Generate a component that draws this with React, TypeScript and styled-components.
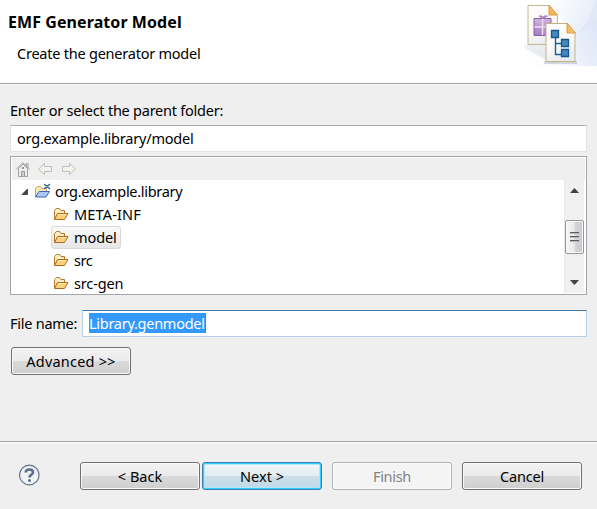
import React from "react";
import styled, { createGlobalStyle, css } from "styled-components";

const GlobalStyle = createGlobalStyle`
  *, *::before, *::after { box-sizing: border-box; }
  body { margin: 0; background: #efefef; overflow: hidden; }
`;

const Dialog = styled.div`
  width: 597px;
  height: 509px;
  display: flex;
  flex-direction: column;
  background: #efefef;
  color: #000;
  font: 14.5px/20px "Noto Sans", "Open Sans", sans-serif;
  white-space: nowrap;
`;

const Text = styled.span<{ $track?: number }>`
  display: block;
  letter-spacing: ${(p) => p.$track ?? -0.3}px;
`;

const Header = styled.header`
  height: 85px;
  display: flex;
  justify-content: space-between;
  background: #fff;
  border-bottom: 1px solid #fcfcfc;
  box-shadow: inset 0 -1px 0 #a0a0a0;
`;

const HeaderText = styled.div`
  padding: 12px 0 0 8px;
`;

const Title = styled.h1`
  margin: 0;
  font-size: 16px;
  line-height: 20px;
  font-weight: 700;
`;

const Subtitle = styled.div`
  padding: 11px 0 0 9px;
`;

const Body = styled.main`
  height: 356px;
  padding: 15px 10px 0;
`;

const FieldLabel = styled.label`
  display: block;
  height: 25px;
`;

const Field = styled.div<{ $focus?: boolean }>`
  flex: 1;
  height: 27px;
  display: flex;
  align-items: center;
  padding: 0 6px 2px;
  background: #fff;
  border: 1px solid ${(p) => (p.$focus ? "#b5cfe7" : "#e2e3ea")};
  border-top-color: ${(p) => (p.$focus ? "#3d7bad" : "#abadb3")};
  border-radius: 1px;
`;

const Selected = styled.span`
  height: 20px;
  background: #3399ff;
  color: #fff;
  border-right: 1px solid #c06a10;
`;

const FolderPanel = styled.section`
  height: 139px;
  margin-top: 4px;
  border: 1px solid #a3a5ab;
  padding: 1px;
  background: #fff;
  display: flex;
  flex-direction: column;
`;

const NavBar = styled.div`
  height: 22px;
  flex: none;
  display: flex;
  background: #efefef;
  padding: 2px 0 0 3px;
  gap: 3px;
`;

const TreeArea = styled.div`
  display: flex;
  height: 113px;
  overflow: hidden;
`;

const Tree = styled.div`
  flex: 1;
  overflow: hidden;
`;

const TreeRow = styled.div<{ $child?: boolean }>`
  height: 23px;
  display: flex;
  align-items: center;
  padding-left: ${(p) => (p.$child ? 39 : 8)}px;
`;

const Node = styled.div<{ $on?: boolean; $root?: boolean }>`
  height: 23px;
  display: flex;
  align-items: center;
  gap: ${(p) => (p.$root ? 4 : 5)}px;
  padding: 0 3px 2px 1px;
  border: 1px solid transparent;
  border-radius: 3px;
  ${(p) =>
    p.$on &&
    css`
      border-color: #d9d9d9;
      background: linear-gradient(#fafafa, #e6e6e6);
    `}
`;

const ScrollBar = styled.div`
  width: 20px;
  height: 113px;
  margin-right: 1px;
  display: flex;
  flex-direction: column;
  align-items: center;
  background: #f0f0f0;
  border-left: 1px solid #e8e8e8;
`;

const Arrow = styled.svg`
  display: block;
  flex: none;
`;

const Thumb = styled.div`
  width: 19px;
  height: 34px;
  margin: 21px 0;
  border: 1px solid #979797;
  border-radius: 2px;
  background: linear-gradient(90deg, #f6f6f6, #e9e9eb 48%, #d5d5d9 55%, #c9c9ce);
  box-shadow: inset 0 0 0 1px #fafafa;
  display: flex;
  flex-direction: column;
  align-items: center;
  justify-content: center;
  gap: 2px;
`;

const Grip = styled.i`
  width: 9px;
  height: 2px;
  background: linear-gradient(#5c5c5c 50%, #b8b8b8 50%);
`;

const FileRow = styled.div`
  display: flex;
  align-items: center;
  margin: 15px 0 10px;
`;

const FileLabel = styled.label`
  width: 72px;
  padding-bottom: 2px;
`;

type Tone = "normal" | "primary" | "disabled";

const tones = {
  normal: css`
    border-color: #707070;
    box-shadow: inset 0 0 0 1px #fafafa;
    background: linear-gradient(#f2f2f2, #ebebeb 48%, #dadada 50%, #cfcfcf);
  `,
  primary: css`
    border-color: #3c7fb1;
    box-shadow: inset 0 0 0 1px #35cbfa, inset 0 0 0 2px #b4e6f7;
    background: linear-gradient(#f0f5f8, #e3edf2 48%, #cddfe9 50%, #bfd9e7);
  `,
  disabled: css`
    border-color: #adb2b5;
    box-shadow: inset 0 0 0 1px #fbfbfb;
    background: #f4f4f4;
    color: #838383;
  `,
};

const Button = styled.button<{ $tone?: Tone; $gap?: number }>`
  width: 120px;
  height: 28px;
  padding: 0;
  margin-left: ${(p) => p.$gap ?? 0}px;
  border: 1px solid;
  border-radius: 3px;
  display: flex;
  align-items: center;
  justify-content: center;
  font: inherit;
  color: #000;
  ${(p) => tones[p.$tone ?? "normal"]}
`;

const Footer = styled.footer`
  height: 68px;
  border-top: 1px solid #a0a0a0;
  box-shadow: inset 0 1px 0 #fff;
  display: flex;
  padding: 20px 0 0 18px;
`;

const HelpSlot = styled.div`
  width: 62px;
  padding-top: 2px;
`;

const Banner = () => (
  <svg width="77" height="67" viewBox="0 0 77 67">
    <defs>
      <linearGradient id="sky" x1="0" y1="0.6" x2="1" y2="0.3">
        <stop offset="0" stopColor="#fff" />
        <stop offset="0.5" stopColor="#f1f4fc" />
        <stop offset="1" stopColor="#dfe7f7" />
      </linearGradient>
      <linearGradient id="glow" x1="0" y1="0" x2="1" y2="0.3">
        <stop offset="0" stopColor="#fff" />
        <stop offset="1" stopColor="#e6ecf9" />
      </linearGradient>
      <linearGradient id="paper" x1="0" y1="0" x2="0.4" y2="1">
        <stop offset="0" stopColor="#fff" />
        <stop offset="0.6" stopColor="#faf9f7" />
        <stop offset="1" stopColor="#e9ecef" />
      </linearGradient>
      <linearGradient id="gift" x1="0" y1="0" x2="0" y2="1">
        <stop offset="0" stopColor="#cdb4de" />
        <stop offset="1" stopColor="#a57bc0" />
      </linearGradient>
    </defs>
    <path d="M4 66V52Q40 50 77 17V66Z" fill="url(#sky)" />
    <path d="M30 0H77V17Q65 29 53 36L38 14Z" fill="url(#glow)" />
    <path d="M77 0V17Q67 28 57 34Q72 18 76 0Z" fill="#e0e7f6" />
    <path d="M4 45H38V63H32L6 49Z" fill="#c9ced8" opacity="0.35" />
    <path d="M8 5.500H29L37.500 15V44.500H8Z" fill="url(#paper)" stroke="#c6b98e" />
    <path d="M29 5L37.500 15H29Z" fill="#f6b85c" stroke="#d99d4b" />
    <path d="M14 18.500H31V35.500H14Z" fill="url(#gift)" stroke="#8f60ae" />
    <path d="M22.500 19V35M14.500 27H30.500" fill="none" stroke="#e9dcf2" strokeWidth="1.600" />
    <path d="M22.500 18.500L19 16H22L22.500 18.500L24 16H27.500Z" fill="#c7a6d9" stroke="#a67dbf" />
    <path d="M24 61H57V64H24Z" fill="#9da6b5" opacity="0.4" />
    <path d="M26 23.500H47L55 33V61.500H26Z" fill="url(#paper)" stroke="#c2b387" />
    <path d="M47 23L55.500 33H47Z" fill="#f9bd64" stroke="#d99d4b" />
    <path d="M35.500 38V54.500H42M35.500 43.500H42" fill="none" stroke="#16629f" strokeWidth="1.400" />
    <path d="M31.500 30.500H38.500V37.500H31.500ZM41.500 39.500H48.500V46.500H41.500ZM41.500 49.500H48.500V56.500H41.500Z" fill="#4a87bb" stroke="#17578f" strokeWidth="1.300" />
  </svg>
);

const Home = () => (
  <svg width="18" height="18" viewBox="0 0 18 18" fill="none" stroke="#a2a2a2">
    <path d="M3.500 8.500V16.500H12.500V8.500L8 4Z" fill="#ececec" />
    <path d="M1 9.500L8 2.500L14.500 9.500M11.500 6V3.500H13V8" />
    <path d="M6.500 16V11.500H9.500V16" fill="#d0d0d0" stroke="#999" />
    <path d="M7 8H9" stroke="#999" strokeWidth="2" />
  </svg>
);

const NavArrow = ({ flip }: { flip?: boolean }) => (
  <svg width="20" height="18" viewBox="0 0 20 18">
    <path
      transform={flip ? "matrix(-1 0 0 1 19 0)" : undefined}
      d="M2.500 9L8.500 3.500V6.500H15.500V11.500H8.500V14.500Z"
      fill="#f4f4ee"
      stroke="#bcbdb7"
      strokeLinejoin="round"
    />
  </svg>
);

const Folder = () => (
  <svg width="16" height="14" viewBox="0 0 16 14" strokeLinejoin="round">
    <path d="M1.500 12V3.500L3.500 1.500H6.500L8 3.500H11.500V6" fill="#fcecc0" stroke="#b8792d" />
    <path d="M1.500 12.500L4.500 6.500H15L11.500 12.500Z" fill="#fbd17b" stroke="#ad6a20" />
    <path d="M5 7.500H13.500" stroke="#ffe9ac" />
  </svg>
);

const Project = () => (
  <svg width="17" height="16" viewBox="0 0 17 16" strokeLinejoin="round">
    <path d="M1.500 13V5.500L3.500 3.500H6.500L8 5.500H12.500V8" fill="#fce9b6" stroke="#c4a066" />
    <path d="M1.500 14L5 8.500H15.500L12 14Z" fill="#a9c9f4" stroke="#3f64b5" />
    <path d="M10 1L12 2.700H14L16 1M10 6L12 4.300H14L16 6" fill="none" stroke="#28658f" strokeWidth="1.200" />
  </svg>
);

const Expander = () => (
  <svg width="12" height="8" viewBox="0 0 12 8">
    <path d="M7.500 1V6.500H2Z" fill="#444" stroke="#262626" strokeWidth="0.700" />
  </svg>
);

const Help = () => (
  <svg width="23" height="23" viewBox="0 0 23 23">
    <circle cx="11.300" cy="11" r="9.800" fill="#f0f1f3" stroke="#60718f" strokeWidth="1.200" />
    <path d="M7.700 8.500Q7.700 5.500 11.400 5.500Q15 5.500 15 8.300Q15 10 13 11Q11.500 11.800 11.500 13.500" fill="none" stroke="#5d6d8f" strokeWidth="2.600" />
    <circle cx="11.500" cy="16.500" r="1.500" fill="#5d6d8f" />
  </svg>
);

const folders = [
  { name: "META-INF", track: 0.15 },
  { name: "model", track: -0.1 },
  { name: "src", track: -0.4 },
  { name: "src-gen", track: -0.15 },
];

export default function App() {
  return (
    <>
      <GlobalStyle />
      <Dialog>
        <Header>
          <HeaderText>
            <Title><Text $track={0.08}>EMF Generator Model</Text></Title>
            <Subtitle><Text $track={-0.23}>Create the generator model</Text></Subtitle>
          </HeaderText>
          <Banner />
        </Header>
        <Body>
          <FieldLabel><Text $track={-0.24}>Enter or select the parent folder:</Text></FieldLabel>
          <Field><Text $track={-0.2}>org.example.library/model</Text></Field>
          <FolderPanel>
            <NavBar><Home /><NavArrow /><NavArrow flip /></NavBar>
            <TreeArea>
              <Tree>
                <TreeRow>
                  <Expander />
                  <Node $root><Project /><Text>org.example.library</Text></Node>
                </TreeRow>
                {folders.map(({ name, track }) => (
                  <TreeRow key={name} $child>
                    <Node $on={name === "model"}><Folder /><Text $track={track}>{name}</Text></Node>
                  </TreeRow>
                ))}
              </Tree>
              <ScrollBar>
                <Arrow width="9" height="19" viewBox="0 0 9 19"><path d="M0 13L4.500 8L9 13Z" fill="#444" /></Arrow>
                <Thumb><Grip /><Grip /><Grip /></Thumb>
                <Arrow width="9" height="14" viewBox="0 0 9 14"><path d="M0 5L4.500 10L9 5Z" fill="#444" /></Arrow>
              </ScrollBar>
            </TreeArea>
          </FolderPanel>
          <FileRow>
            <FileLabel><Text $track={-0.25}>File name:</Text></FileLabel>
            <Field $focus><Selected><Text $track={-0.27}>Library.genmodel</Text></Selected></Field>
          </FileRow>
          <Button $gap={1}><Text $track={0.2}>Advanced &gt;&gt;</Text></Button>
        </Body>
        <Footer>
          <HelpSlot><Help /></HelpSlot>
          <Button><Text $track={0}>&lt; Back</Text></Button>
          <Button $tone="primary" $gap={2}><Text $track={0}>Next &gt;</Text></Button>
          <Button $tone="disabled" $gap={10} disabled><Text>Finish</Text></Button>
          <Button $gap={10}><Text $track={-0.2}>Cancel</Text></Button>
        </Footer>
      </Dialog>
    </>
  );
}
